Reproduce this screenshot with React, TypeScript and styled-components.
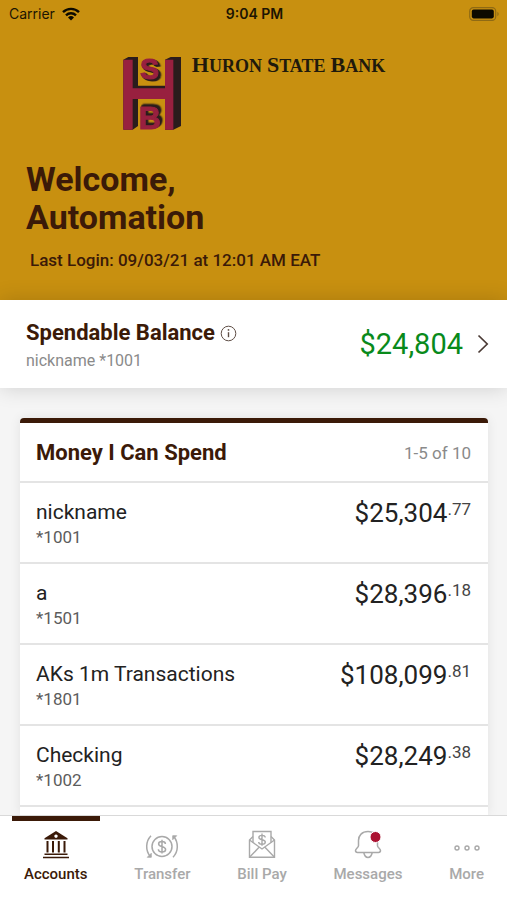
import React from "react";
import styled, { createGlobalStyle } from "styled-components";

const brand = "#c89010";
const brown = "#3b1a08";
const ink = "#2a1c1c";
const crimson = "#98203f";

const GlobalStyle = createGlobalStyle`
  *, *::before, *::after { box-sizing: border-box; }
  body {
    margin: 0;
    background: #f5f5f5;
    color: #222;
    font-family: Roboto, "Liberation Sans", sans-serif;
  }
  h1, h2, p { margin: 0; }
  button { font: inherit; color: inherit; border: 0; background: none; padding: 0; cursor: pointer; }
`;

const Screen = styled.div`
  display: flex;
  flex-direction: column;
  height: 100vh;
`;

const Hero = styled.header`
  flex: none;
  background: ${brand};
  color: ${brown};
`;

const StatusBar = styled.div`
  display: grid;
  grid-template-columns: 1fr auto 1fr;
  align-items: center;
  height: 27px;
  padding: 0 7px 0 9px;
  color: #1c1502;
  font-family: Inter, "Liberation Sans", sans-serif;
  font-size: 14px;
`;

const Carrier = styled.span`
  display: flex;
  align-items: center;
  gap: 7px;
`;

const Clock = styled.span`
  font-weight: 600;
`;

const Battery = styled.svg`
  justify-self: end;
`;

const Logo = styled.div`
  display: flex;
  justify-content: center;
  gap: 10px;
  padding-top: 24px;
`;

const BankName = styled.div`
  display: flex;
  align-items: baseline;
  gap: 5px;
  height: 24px;
  padding-top: 4px;
  color: #1f1a0c;
  font-family: "Liberation Serif", serif;
  font-size: 18px;
  font-weight: 700;
  line-height: 20px;
  text-transform: uppercase;
`;

const Word = styled.span`
  display: inline-block;

  &::first-letter {
    font-size: 22px;
  }
`;

const MarkLetter = styled.text<{ $size: number }>`
  fill: ${crimson};
  stroke: ${crimson};
  stroke-width: 3px;
  font-family: "Liberation Sans", sans-serif;
  font-size: ${(p) => p.$size}px;
  font-weight: 700;
`;

const RaisedUp = styled.g`
  filter: drop-shadow(4px -4px 0 ${ink}) drop-shadow(4px -4px 0 ${ink});
`;

const RaisedDown = styled.g`
  filter: drop-shadow(4px 3px 0 ${ink}) drop-shadow(4px 3px 0 ${ink});
`;

const Greeting = styled.div`
  padding: 23px 26px 30px;
`;

const Welcome = styled.h1`
  font-size: 34px;
  font-weight: 700;
  line-height: 38px;
`;

const LastLogin = styled.p`
  padding: 14px 4px 0;
  font-size: 17px;
  font-weight: 500;
  line-height: 20px;
`;

const Content = styled.main`
  display: flex;
  flex: 1;
  flex-direction: column;
  min-height: 0;
`;

const Spendable = styled.section`
  display: flex;
  flex: none;
  align-items: center;
  justify-content: space-between;
  height: 88px;
  padding: 0 18px 0 26px;
  background: #fff;
  box-shadow: 0 0 20px rgba(0, 0, 0, 0.16);
`;

const SpendableLabel = styled.div`
  padding-top: 6px;
`;

const Heading = styled.h2`
  color: ${brown};
  font-size: 22px;
  font-weight: 700;
  line-height: 28px;
`;

const HeadingLine = styled.div`
  display: flex;
  align-items: center;
  gap: 5px;
`;

const IconButton = styled.button`
  display: flex;
`;

const Muted = styled.p<{ $tone?: string; $small?: boolean }>`
  color: ${(p) => p.$tone ?? "#8a8a8a"};
  font-size: ${(p) => (p.$small ? 16 : 17)}px;
  line-height: ${(p) => (p.$small ? 28 : 24)}px;
`;

const BalanceButton = styled.button`
  display: flex;
  align-items: center;
  gap: 14px;
  color: #098a1b;
  font-size: 29px;
  line-height: 36px;
`;

const Accounts = styled.div`
  display: flex;
  flex: 1;
  flex-direction: column;
  min-height: 0;
  padding: 30px 19px 0 20px;
  overflow: hidden;
`;

const Card = styled.section`
  flex: 1;
  border-top: 5px solid ${brown};
  border-radius: 4px 4px 0 0;
  background: #fff;
  box-shadow: 0 0 12px rgba(0, 0, 0, 0.08);
`;

const CardHeader = styled.div`
  display: flex;
  align-items: center;
  justify-content: space-between;
  height: 60px;
  padding: 2px 17px 0 16px;
  border-bottom: 2px solid #e4e4e4;
`;

const List = styled.ul`
  margin: 0;
  padding: 0;
  list-style: none;
`;

const Row = styled.li`
  display: flex;
  align-items: flex-start;
  justify-content: space-between;
  height: 81px;
  padding: 16px 17px 0 16px;
  border-bottom: 2px solid #e4e4e4;
`;

const AccountName = styled.p`
  font-size: 21px;
  line-height: 26px;
`;

const Amount = styled.p`
  display: flex;
  font-size: 26px;
  line-height: 28px;
`;

const Cents = styled.span`
  color: #444;
  font-size: 17px;
  line-height: 20px;
`;

const TabBar = styled.nav`
  display: flex;
  flex: none;
  justify-content: space-between;
  height: 85px;
  padding: 0 11px 0 12px;
  border-top: 1px solid #d9d9d9;
  background: #fff;
`;

const Tab = styled.button<{ $active?: boolean }>`
  display: flex;
  flex-direction: column;
  align-items: center;
  gap: 3px;
  padding: 8px 12px 0;
  border-top: 5px solid ${(p) => (p.$active ? brown : "transparent")};
  color: ${(p) => (p.$active ? brown : "#a9a9a9")};
  font-size: 15px;
  font-weight: 500;
  line-height: 20px;
`;

const accounts = [
  { name: "nickname", number: "*1001", dollars: "$25,304", cents: ".77" },
  { name: "a", number: "*1501", dollars: "$28,396", cents: ".18" },
  { name: "AKs 1m Transactions", number: "*1801", dollars: "$108,099", cents: ".81" },
  { name: "Checking", number: "*1002", dollars: "$28,249", cents: ".38" },
];

const WifiIcon = () => (
  <svg width="18" height="14" viewBox="0 0 18 14" fill="none" stroke="#0d0a00" strokeWidth="2.4">
    <path d="M1 5.2a11.4 11.4 0 0 1 16 0" />
    <path d="M4 8.3a7.2 7.2 0 0 1 10 0" />
    <path d="M9 13.6 6 10.5a4.3 4.3 0 0 1 6 0Z" fill="#0d0a00" stroke="none" />
  </svg>
);

const BatteryIcon = () => (
  <Battery width="31" height="14" viewBox="0 0 31 14">
    <rect x="0.7" y="0.7" width="26" height="12.6" rx="3.6" fill="none" stroke="#8f6a14" strokeWidth="1.2" />
    <rect x="2.8" y="2.6" width="22" height="8.8" rx="1.8" fill="#0d0a00" />
    <path d="M28.4 4.8a2.5 2.5 0 0 1 0 4.4Z" fill="#8f6a14" />
  </Battery>
);

const BankMark = () => (
  <svg width="60" height="86" viewBox="36 18 180 258">
    <path fill={ink} d="M40 44 55 36H84V122H165V44L182 36H213V243L190 254H165V163H84V243L68 254H40Z" />
    <path fill={crimson} d="M40 44H68V130H165V44H190V254H165V162H68V254H40Z" />
    <path fill={brand} d="M84 162H165V254H84Z" />
    <RaisedDown>
      <MarkLetter $size={86} x="90" y="101">
        S
      </MarkLetter>
    </RaisedDown>
    <RaisedUp>
      <MarkLetter $size={92} x="86" y="252">
        B
      </MarkLetter>
    </RaisedUp>
  </svg>
);

const InfoIcon = () => (
  <svg width="17" height="17" viewBox="0 0 17 17" fill="none" stroke="#5e4d45">
    <circle cx="8.5" cy="8.5" r="7.3" />
    <path d="M8.5 7.2v5" strokeWidth="1.4" />
    <circle cx="8.5" cy="4.9" r="0.9" fill="#5e4d45" stroke="none" />
  </svg>
);

const ChevronIcon = () => (
  <svg width="12" height="20" viewBox="0 0 12 20" fill="none" stroke="#4a3a34" strokeWidth="1.7">
    <path d="m1.5 1.5 8.7 8.5-8.7 8.5" />
  </svg>
);

const AccountsIcon = () => (
  <svg width="28" height="32" viewBox="0 0 28 32" fill="none" stroke="currentColor">
    <path fillRule="evenodd" stroke="none" fill="currentColor" d="M14 2 25.5 9.2V10.4H2.5V9.2ZM14 5.4a1.7 1.7 0 1 0 .01 0Z" />
    <path strokeWidth="2" d="M5.5 12v11.5M11 12v11.5M16.8 12v11.5M22.5 12v11.5" />
    <path strokeWidth="1.6" d="M2.5 25.3h23M1 28.5h26" />
  </svg>
);

const TransferIcon = () => (
  <svg width="34" height="32" viewBox="0 0 34 32" fill="none" stroke="currentColor" strokeWidth="1.5">
    <circle cx="17" cy="17.5" r="10" />
    <path d="M20.4 15c0-1.500-1.400-2.400-3.400-2.400s-3.400.9-3.400 2.400c0 3.600 7 1.600 7 5.400 0 1.500-1.500 2.500-3.600 2.500s-3.600-1-3.600-2.600M17 10.800v13.800" />
    <path d="M6 6.800C.4 12.600.4 21.400 5.200 27.500M28 28.200c5.600-5.800 5.600-14.600.8-20.700" />
    <path d="M2.300 28.300h4v-4ZM31.700 6.700h-4v4Z" fill="currentColor" strokeWidth="0.8" />
  </svg>
);

const BillIcon = () => (
  <svg width="28" height="32" viewBox="0 0 28 32" fill="none" stroke="currentColor" strokeWidth="1.4">
    <path d="M5 13.500V2.500h18v11" />
    <path d="M5 7.500 1.500 11v17.300h25V11L23 7.500" />
    <path d="m1.500 11 12.500 9 12.500-9M1.500 28.300l9.800-10.200M26.500 28.300l-9.800-10.200" />
    <path d="M17.200 8.500c0-1.400-1.400-2.100-3.200-2.100s-3.100.8-3.100 2.100c0 3 6.400 1.400 6.400 4.500 0 1.400-1.400 2.200-3.300 2.200s-3.300-.9-3.300-2.300M14 4.500v12.300" />
  </svg>
);

const MessagesIcon = () => (
  <svg width="28" height="32" viewBox="0 0 28 32" fill="none" stroke="currentColor" strokeWidth="1.5">
    <path d="M14 2.500c-6 0-9.500 4-9.500 9v5.300c0 1.800-3 2.700-3 4.800 0 1.300.8 1.900 2 1.900h21c1.200 0 2-.6 2-1.900 0-2.100-3-3-3-4.800v-5.300c0-5-3.500-9-9.500-9Z" />
    <path d="M9.800 23.500c.6 3 2 4.900 4.200 4.900s3.600-1.900 4.200-4.900" />
    <circle cx="21.500" cy="8" r="5.500" fill="#ab1231" stroke="#fff" strokeWidth="1" />
  </svg>
);

const MoreIcon = () => (
  <svg width="28" height="32" viewBox="0 0 28 32" fill="none" stroke="currentColor" strokeWidth="1.4">
    <circle cx="4" cy="19" r="2" />
    <circle cx="14" cy="19" r="2" />
    <circle cx="24" cy="19" r="2" />
  </svg>
);

const tabs = [
  { label: "Accounts", Icon: AccountsIcon, active: true },
  { label: "Transfer", Icon: TransferIcon },
  { label: "Bill Pay", Icon: BillIcon },
  { label: "Messages", Icon: MessagesIcon },
  { label: "More", Icon: MoreIcon },
];

export default function App() {
  return (
    <Screen>
      <GlobalStyle />
      <Hero>
        <StatusBar>
          <Carrier>
            Carrier
            <WifiIcon />
          </Carrier>
          <Clock>9:04 PM</Clock>
          <BatteryIcon />
        </StatusBar>
        <Logo>
          <BankMark />
          <BankName>
            <Word>Huron</Word> <Word>State</Word> <Word>Bank</Word>
          </BankName>
        </Logo>
        <Greeting>
          <Welcome>
            Welcome,
            <br />
            Automation
          </Welcome>
          <LastLogin>Last Login: 09/03/21 at 12:01 AM EAT</LastLogin>
        </Greeting>
      </Hero>
      <Content>
        <Spendable>
          <SpendableLabel>
            <HeadingLine>
              <Heading>Spendable Balance</Heading>
              <IconButton aria-label="About spendable balance">
                <InfoIcon />
              </IconButton>
            </HeadingLine>
            <Muted $small>nickname *1001</Muted>
          </SpendableLabel>
          <BalanceButton>
            $24,804
            <ChevronIcon />
          </BalanceButton>
        </Spendable>
        <Accounts>
          <Card>
            <CardHeader>
              <Heading>Money I Can Spend</Heading>
              <Muted>1-5 of 10</Muted>
            </CardHeader>
            <List>
              {accounts.map((a) => (
                <Row key={a.number}>
                  <div>
                    <AccountName>{a.name}</AccountName>
                    <Muted $tone="#5c5c5c">{a.number}</Muted>
                  </div>
                  <Amount>
                    {a.dollars}
                    <Cents>{a.cents}</Cents>
                  </Amount>
                </Row>
              ))}
            </List>
          </Card>
        </Accounts>
      </Content>
      <TabBar>
        {tabs.map(({ label, Icon, active }) => (
          <Tab key={label} $active={active} aria-current={active ? "page" : undefined}>
            <Icon />
            {label}
          </Tab>
        ))}
      </TabBar>
    </Screen>
  );
}
